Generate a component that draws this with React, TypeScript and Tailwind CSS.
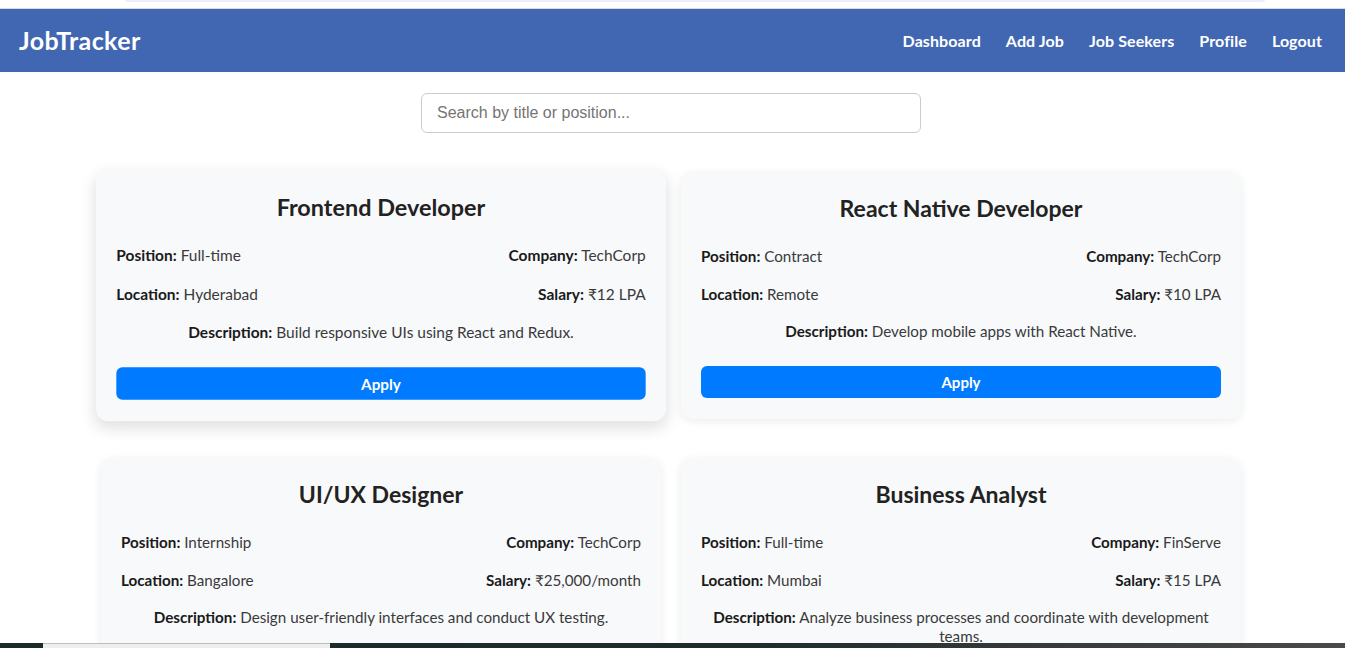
import React from "react";

type Job = {
  title: string;
  position: string;
  company: string;
  location: string;
  salary: string;
  description: React.ReactNode;
  hover?: boolean;
};

const jobs: Job[] = [
  {
    title: "Frontend Developer",
    position: "Full-time",
    company: "TechCorp",
    location: "Hyderabad",
    salary: "₹12 LPA",
    description: "Build responsive UIs using React and Redux.",
    hover: true,
  },
  {
    title: "React Native Developer",
    position: "Contract",
    company: "TechCorp",
    location: "Remote",
    salary: "₹10 LPA",
    description: "Develop mobile apps with React Native.",
  },
  {
    title: "UI/UX Designer",
    position: "Internship",
    company: "TechCorp",
    location: "Bangalore",
    salary: "₹25,000/month",
    description: "Design user-friendly interfaces and conduct UX testing.",
  },
  {
    title: "Business Analyst",
    position: "Full-time",
    company: "FinServe",
    location: "Mumbai",
    salary: "₹15 LPA",
    description: (
      <>
        Analyze business processes and coordinate with development
        <br />
        teams.
      </>
    ),
  },
];

function Field({ label, value }: { label: string; value: string }) {
  return (
    <span className="leading-[20px]">
      <span className="font-bold text-[#1a1a1a]">{label}:</span>{" "}
      <span className="text-[#3a3a3a]">{value}</span>
    </span>
  );
}

function Card({ job }: { job: Job }) {
  return (
    <div
      className={
        "bg-[#f8f9fa] rounded-[12px] px-[20px] pt-[20px] pb-[21px] flex flex-col " +
        (job.hover
          ? "scale-[1.018] shadow-[0_6px_16px_rgba(0,0,0,0.13)] relative z-10"
          : "shadow-[0_2px_10px_rgba(0,0,0,0.08)]")
      }
    >
      <h3 className="text-[23px] leading-[32px] font-bold text-center text-[#222]">
        {job.title}
      </h3>
      <div className="mt-[22px] flex justify-between">
        <Field label="Position" value={job.position} />
        <Field label="Company" value={job.company} />
      </div>
      <div className="mt-[18px] flex justify-between">
        <Field label="Location" value={job.location} />
        <Field label="Salary" value={job.salary} />
      </div>
      <p className="mt-[18px] text-center leading-[19px] text-[#3a3a3a]">
        <span className="font-bold text-[#1a1a1a]">Description:</span>{" "}
        {job.description}
      </p>
      <button className="mt-[25px] h-[32px] w-full rounded-[6px] bg-[#007bff] text-white font-bold text-[15px]">
        Apply
      </button>
    </div>
  );
}

export default function App() {
  return (
    <div className="min-h-screen bg-white font-['Lato','Noto_Sans',sans-serif] text-[15.2px] relative">
      {/* top strip */}
      <div className="h-[9px] relative border-b border-[#d8dcd8]">
        <div className="absolute left-[125px] w-[1140px] top-0 h-[2px] bg-[#eceff8] rounded-b-[4px]" />
      </div>

      {/* navbar */}
      <nav className="h-[63px] bg-[#4267b2] flex items-center justify-between pl-[19px] pr-[23px] text-white">
        <div className="text-[25px] font-bold tracking-[0.4px]">JobTracker</div>
        <div className="flex items-center gap-[25px] text-[16px] font-bold tracking-[0.1px]">
          <span>Dashboard</span>
          <span>Add Job</span>
          <span>Job Seekers</span>
          <span>Profile</span>
          <span>Logout</span>
        </div>
      </nav>

      {/* search */}
      <div className="mt-[21px] flex justify-center pr-[3px]">
        <input
          className="w-[500px] h-[40px] rounded-[6px] border border-[#cccccc] px-[15px] text-[16px] font-['Liberation_Sans',Arial,sans-serif] placeholder:text-[#757575] outline-none"
          placeholder="Search by title or position..."
        />
      </div>

      {/* cards */}
      <div className="mt-[39px] ml-[101px] w-[1140px] grid grid-cols-2 gap-x-[20px] gap-y-[39px] pb-[40px]">
        {jobs.map((j) => (
          <Card key={j.title} job={j} />
        ))}
      </div>

      {/* faint snip tooltip overlay */}
      <div className="absolute left-[483px] top-[274px] w-[172px] h-[22px] bg-[#e9eef8]/50 z-0 flex items-center pl-[6px] pointer-events-none">
        <span className="w-[6px] h-[6px] rounded-full bg-[#dfe4ee]" />
      </div>

      {/* taskbar sliver */}
      <div className="fixed left-0 right-0 bottom-0 h-[5px] bg-[linear-gradient(90deg,#1c2a2a_0%,#1f2b2b_55%,#4a4a4a_100%)] z-30">
        <div className="absolute left-[43px] w-[287px] top-0 bottom-0 bg-[#eeeeee] border-t border-[#bdbdbd]" />
      </div>
    </div>
  );
}
